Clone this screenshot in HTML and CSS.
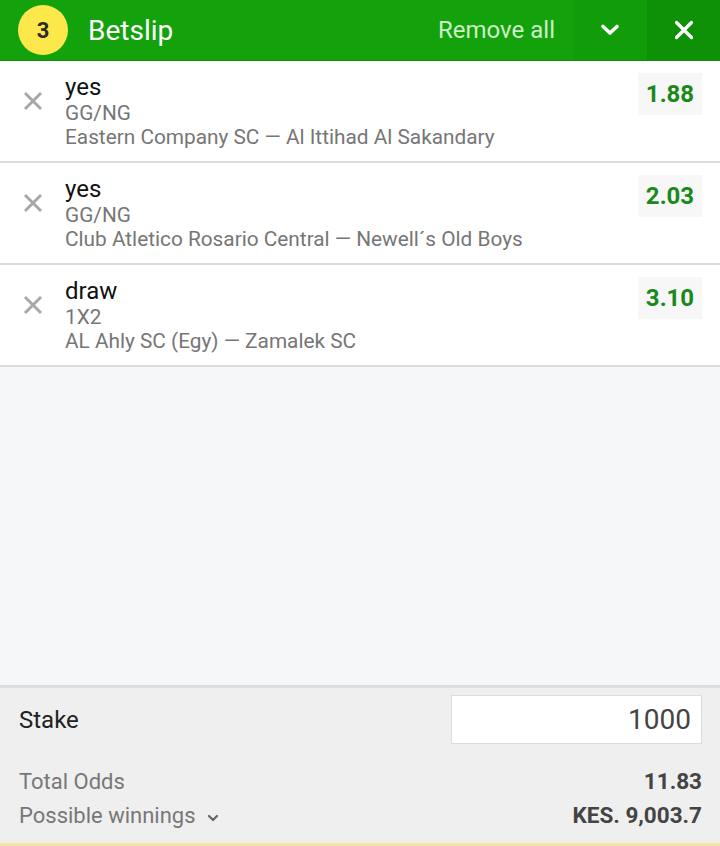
FILE: index.html
```html
<!DOCTYPE html>
<html lang="en">
  <head>
    <meta charset="UTF-8" />
    <meta name="viewport" content="width=device-width, initial-scale=1.0" />
    <title>Betslip</title>
    <link rel="stylesheet" href="styles.css">
  </head>
  <body>
    <div class="slip">
      <header class="slip-head">
        <span class="count">3</span>
        <span class="title">Betslip</span>
        <button class="remove-all">Remove all</button>
        <button class="head-btn collapse">
          <svg width="20" height="14" viewBox="0 0 20 14"><path d="M3 3.5l7 6.5 7-6.5" fill="none" stroke="#fff" stroke-width="3.6" stroke-linecap="round" stroke-linejoin="round"/></svg>
        </button>
        <button class="head-btn close">
          <svg width="20" height="20" viewBox="0 0 20 20"><path d="M2.5 2.5l15 15M17.5 2.5l-15 15" stroke="#fff" stroke-width="3.2" stroke-linecap="round"/></svg>
        </button>
      </header>

      <ul class="bets">
        <li class="bet">
          <button class="bet-remove">
            <svg width="20" height="20" viewBox="0 0 20 20"><path d="M2 2l16 16M18 2L2 18" stroke="#a8a8a8" stroke-width="3"/></svg>
          </button>
          <div class="bet-info">
            <div class="pick">yes</div>
            <div class="market">GG/NG</div>
            <div class="match">Eastern Company SC — Al Ittihad Al Sakandary</div>
          </div>
          <div class="odds">1.88</div>
        </li>
        <li class="bet">
          <button class="bet-remove">
            <svg width="20" height="20" viewBox="0 0 20 20"><path d="M2 2l16 16M18 2L2 18" stroke="#a8a8a8" stroke-width="3"/></svg>
          </button>
          <div class="bet-info">
            <div class="pick">yes</div>
            <div class="market">GG/NG</div>
            <div class="match">Club Atletico Rosario Central — Newell´s Old Boys</div>
          </div>
          <div class="odds">2.03</div>
        </li>
        <li class="bet">
          <button class="bet-remove">
            <svg width="20" height="20" viewBox="0 0 20 20"><path d="M2 2l16 16M18 2L2 18" stroke="#a8a8a8" stroke-width="3"/></svg>
          </button>
          <div class="bet-info">
            <div class="pick">draw</div>
            <div class="market">1X2</div>
            <div class="match">AL Ahly SC (Egy) — Zamalek SC</div>
          </div>
          <div class="odds">3.10</div>
        </li>
      </ul>

      <div class="spacer"></div>

      <footer class="slip-foot">
        <div class="stake-row">
          <label for="stake">Stake</label>
          <input id="stake" type="text" value="1000" />
        </div>
        <div class="sum-row first">
          <span>Total Odds</span>
          <strong>11.83</strong>
        </div>
        <div class="sum-row">
          <span>Possible winnings
            <svg width="12" height="9" viewBox="0 0 12 9"><path d="M2 2l4 4 4-4" fill="none" stroke="#666" stroke-width="2.2" stroke-linecap="round" stroke-linejoin="round"/></svg>
          </span>
          <strong>KES. 9,003.7</strong>
        </div>
      </footer>
    </div>
  </body>
</html>
```

FILE: styles.css
```css
* {
  box-sizing: border-box;
  font-family: Roboto, "Liberation Sans", sans-serif;
}
body {
  margin: 0;
  background: #f6f7f9;
}
button {
  border: 0;
  background: none;
  padding: 0;
  cursor: pointer;
}
.slip {
  display: flex;
  flex-direction: column;
  height: 846px;
  border-bottom: 3px solid #f3e5a3;
}
.slip-head {
  display: flex;
  align-items: center;
  flex-shrink: 0;
  height: 61px;
  background: #13a20b;
  border-bottom: 1px solid #0f8f08;
  color: #fff;
}
.count {
  display: flex;
  align-items: center;
  justify-content: center;
  width: 50px;
  height: 50px;
  margin-left: 18px;
  border-radius: 50%;
  background: #fde84c;
  color: #2b2b2b;
  font-size: 22px;
  font-weight: 700;
}
.title {
  margin-left: 20px;
  font-size: 28px;
}
.remove-all {
  margin-left: auto;
  margin-right: 18px;
  color: #cdeec6;
  font-size: 24px;
}
.head-btn {
  display: flex;
  align-items: center;
  justify-content: center;
  width: 74px;
  height: 60px;
}
.collapse {
  background: #119c09;
}
.close {
  width: 73px;
  background: #0f9107;
}
.bets {
  list-style: none;
  margin: 0;
  padding: 0;
  background: #fff;
}
.bet {
  display: flex;
  height: 102px;
  padding-top: 12px;
  border-bottom: 2px solid #dcdcdc;
}
.bet-remove {
  display: flex;
  justify-content: center;
  width: 65px;
  height: 38px;
  padding-top: 18px;
}
.bet-info {
  flex: 1;
}
.pick {
  font-size: 24px;
  line-height: 28px;
  color: #111;
}
.market,
.match {
  font-size: 20.8px;
  line-height: 24px;
  color: #767676;
}
.odds {
  align-self: flex-start;
  width: 64px;
  height: 42px;
  margin-right: 18px;
  line-height: 42px;
  text-align: center;
  background: #f7f7f7;
  color: #19891a;
  font-size: 24px;
  font-weight: 700;
}
.spacer {
  flex: 1;
}
.slip-foot {
  flex-shrink: 0;
  background: #efefef;
  border-top: 3px solid #dedede;
  padding: 7px 18px 11px 19px;
}
.stake-row {
  display: flex;
  align-items: center;
  justify-content: space-between;
}
.stake-row label {
  font-size: 24px;
  color: #222;
}
.stake-row input {
  width: 251px;
  height: 49px;
  padding: 0 10px;
  border: 1px solid #dcdcdc;
  background: #fff;
  text-align: right;
  font-size: 28px;
  color: #444;
  outline: none;
}
.sum-row {
  display: flex;
  justify-content: space-between;
  align-items: center;
  height: 34px;
  font-size: 22px;
  color: #777;
}
.sum-row.first {
  margin-top: 20px;
}
.sum-row strong {
  color: #444;
  font-size: 22.5px;
}
.sum-row svg {
  margin-left: 6px;
}
```
